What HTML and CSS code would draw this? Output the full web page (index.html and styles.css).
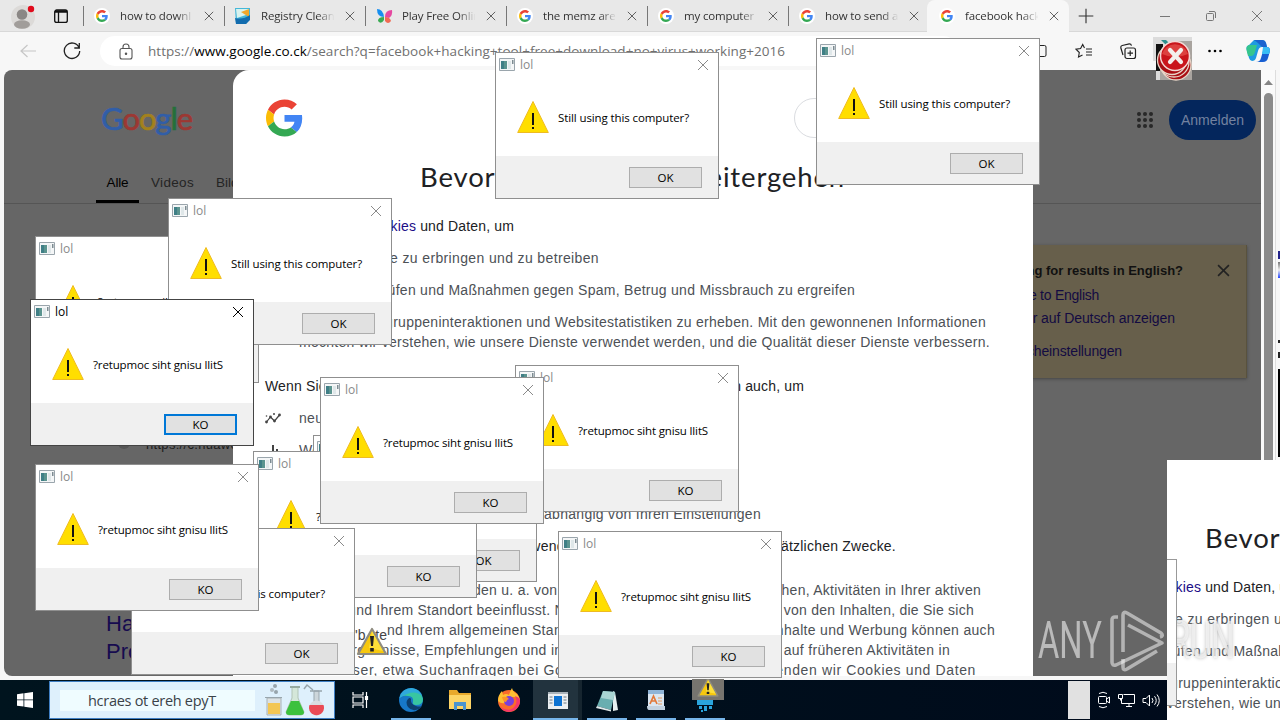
FILE: index.html
```html
<!DOCTYPE html>
<html lang="de">
<head>
<meta charset="utf-8">
<title>facebook hacking tool - Google Suche</title>
<link rel="stylesheet" href="styles.css">
</head>
<body>
<svg class="defs" aria-hidden="true">
  <symbol id="g" viewBox="0 0 48 48">
    <path fill="#EA4335" d="M24 9.5c3.54 0 6.71 1.22 9.21 3.6l6.85-6.85C35.9 2.38 30.47 0 24 0 14.62 0 6.51 5.38 2.56 13.22l7.98 6.19C12.43 13.72 17.74 9.5 24 9.5z"/>
    <path fill="#4285F4" d="M46.98 24.55c0-1.57-.15-3.09-.38-4.55H24v9.02h12.94c-.58 2.96-2.26 5.48-4.78 7.18l7.73 6c4.51-4.18 7.09-10.36 7.09-17.65z"/>
    <path fill="#FBBC05" d="M10.53 28.59c-.48-1.45-.76-2.99-.76-4.59s.27-3.14.76-4.59l-7.98-6.19C.92 16.46 0 20.12 0 24c0 3.88.92 7.54 2.56 10.78l7.97-6.19z"/>
    <path fill="#34A853" d="M24 48c6.48 0 11.93-2.13 15.89-5.81l-7.73-6c-2.15 1.45-4.92 2.3-8.16 2.3-6.26 0-11.57-4.22-13.47-9.91l-7.98 6.19C6.51 42.62 14.62 48 24 48z"/>
  </symbol>
  <symbol id="x" viewBox="0 0 12 12"><path d="M1 1l10 10M11 1L1 11" fill="none" stroke="currentColor"/></symbol>
  <symbol id="warn" viewBox="0 0 32 32">
    <path d="M16 .5L31.3 31.5H.7z" fill="#ffde00" stroke="#eebb22"/>
    <path d="M15 12h2v12h-2zM15 26h2v2h-2z" fill="#111"/>
  </symbol>
  <symbol id="oldwarn" viewBox="0 0 32 30">
    <path d="M16 2L30 27H2z" fill="#f7c80e" stroke="#8f8c80" stroke-width="2.2" stroke-linejoin="round"/>
    <path d="M16 4L27 24l-14-3z" fill="#ffe84a" opacity=".7"/>
    <path d="M14 9h4l-1 10h-2zM14.200 21h3.600v3.400h-3.600z" fill="#222"/>
  </symbol>
  <symbol id="app" viewBox="0 0 16 13">
    <path d="M.5.5h15v12H.5z" fill="#f4f6f7" stroke="#9aa5ac"/>
    <path d="M2 3h6v8H2z" fill="#5b948f"/><path d="M2 3h3v8H2z" fill="#3f7f86"/>
    <path d="M9 3h3v8H9z" fill="#dfe7e9"/><path d="M13 2h1.500v4H13z" fill="#7d8b92"/>
  </symbol>
</svg>

<div class="screen">
  <header class="tabbar">
    <div class="tabtools">
      <svg width="24" height="28" viewBox="0 0 24 28"><circle cx="12" cy="15" r="12" fill="#dcdad8"/><circle cx="11" cy="12.500" r="5.300" fill="#8b8785"/><ellipse cx="11" cy="22.500" rx="8" ry="4.200" fill="#a19d9a"/><circle cx="20" cy="7" r="3.200" fill="#e00b1c"/></svg>
      <svg width="16" height="16" viewBox="0 0 16 16" fill="none" stroke="#111" stroke-width="1.300"><rect x="1.700" y="2" width="12.600" height="12.400" rx="2"/><path d="M2 4h12M2 3h12M5.500 4v10"/></svg>
    </div>
    <div class="tabs" id="tabs"></div>
    <svg class="plus" width="18" height="18" viewBox="0 0 16 16"><path d="M8 1.500v13M1.500 8h13" stroke="#333"/></svg>
    <div class="winbtns">
      <svg width="12" height="12" viewBox="0 0 12 12"><path d="M1 6.500h10" stroke="#777"/></svg>
      <svg width="12" height="12" viewBox="0 0 12 12" fill="none" stroke="#777"><rect x="1.500" y="3.500" width="7" height="7" rx="1"/><path d="M4 1.500h5q1.500 0 1.500 1.500v5"/></svg>
      <svg class="gray" width="12" height="12"><use href="#x"/></svg>
    </div>
  </header>

  <div class="toolbar">
    <svg class="back" width="18" height="16" viewBox="0 0 18 16"><path d="M17 8H2M8.500 2L2 8l6.500 6" fill="none" stroke="#c6c6c6" stroke-width="1.200"/></svg>
    <svg class="reload" width="18" height="18" viewBox="0 0 18 18"><path d="M16 5.500A7.700 7.700 0 1 0 16.700 9M16.300 1v5h-5" fill="none" stroke="#222" stroke-width="1.300"/></svg>
    <div class="address">
      <svg width="14" height="17" viewBox="0 0 14 17" fill="none" stroke="#555" stroke-width="1.100"><rect x="1" y="5.500" width="12" height="10.500" rx="2"/><path d="M4 5.500V4a3 3 0 0 1 6 0v1.500"/><circle cx="7" cy="10.700" r=".7" fill="#555"/></svg>
      <span class="url" data-w="637">https://<b>www.google.co.ck</b>/search?q=facebook+hacking+tool+free+download+no+virus+working+2016</span>
    </div>
    <div class="actions">
      <svg width="18" height="16" viewBox="0 0 18 16" fill="none" stroke="#222"><rect x="2" y="2.500" width="13" height="11" rx="1.500"/></svg>
      <svg width="18" height="16" viewBox="0 0 18 16" fill="none" stroke="#222" stroke-width="1.100"><path d="M9.500 5L7.700 1.500 5.600 5.600 1 6.200 4.300 9.500 3.500 14l4-2M11 6h6M11 9h6M11 12h6"/></svg>
      <svg width="18" height="17" viewBox="0 0 18 17" fill="none" stroke="#222" stroke-width="1.200"><rect x="6" y="5" width="10.500" height="10.500" rx="2"/><path d="M11.200 7.500v5.500M8.500 10.200H14M4 12L1.800 4.800Q1.500 3 3.200 2.500l7-1.700Q12 .7 12.500 2.700"/></svg>
      <div class="ext">
        <svg width="40" height="45" viewBox="0 0 40 45"><path d="M0 0h39v43H3V24H0z" fill="#dcdcdc"/><path d="M3 7h7v27H3z" fill="#111"/><path d="M8 3l8 8h5l-8-8z" fill="#2c8f8c"/><path d="M24 4h15v39H7V28h12z" fill="#a9a49f"/>
          <g stroke="#e8d6c8" stroke-width="1.300" fill="#a90f14"><circle cx="23" cy="28" r="15"/><circle cx="21" cy="25" r="15"/><circle cx="19" cy="23" r="14.500"/></g><circle cx="22" cy="19" r="14.500" fill="#c9151b" stroke="#f3d9d5" stroke-width="1.500"/><path d="M9 17a13.500 13.500 0 0 1 26 0q-13 6-26 0z" fill="#e5544f" opacity=".7"/><path d="M17 13l11 12M28 13L17 25" stroke="#f3efec" stroke-width="4.200" stroke-linecap="round"/></svg>
      </div>
      <svg width="16" height="6" viewBox="0 0 16 6"><circle cx="2.500" cy="3" r="1.300"/><circle cx="8" cy="3" r="1.300"/><circle cx="13.500" cy="3" r="1.300"/></svg>
      <svg width="24" height="22" viewBox="0 0 24 22"><path d="M8 0h8q3 0 4 3l1 4h-5q-3 0-4 4l-2 7q-1 3-4 3-2 0-3-3L.5 9Q0 6 3 5z" fill="#1e9be0"/><path d="M3 5h8l-2 7q-1 4-4 4H2L.5 10Q0 6 3 5z" fill="#35c58d"/><path d="M10 22q4 0 5-4l2-7q1-4 4-4 3 0 3 4l-2 7q-1 4-5 4z" fill="#185fd2"/><path d="M17 7h4q3 0 3 4l-1 3h-7z" fill="#38bdf5"/><path d="M8 0h8q3 0 4 3l1 4h-5l-3-3q-2-2-5-4z" fill="#1a63cf"/></svg>
    </div>
  </div>

  <main class="viewport">
    <section class="results">
      <div class="top">
        <div class="logo" data-w="91"><i class="b">G</i><i class="r">o</i><i class="y">o</i><i class="b">g</i><i class="gr">l</i><i class="r">e</i></div>
        <div class="account">
          <svg width="16" height="16" viewBox="0 0 16 16" fill="#282828"><circle cx="2" cy="2" r="2"/><circle cx="8" cy="2" r="2"/><circle cx="14" cy="2" r="2"/><circle cx="2" cy="8" r="2"/><circle cx="8" cy="8" r="2"/><circle cx="14" cy="8" r="2"/><circle cx="2" cy="14" r="2"/><circle cx="8" cy="14" r="2"/><circle cx="14" cy="14" r="2"/></svg>
          <div class="signin"><span data-w="63">Anmelden</span></div>
        </div>
      </div>
      <nav class="nav"><span class="on"><span data-w="22">Alle</span></span><span data-w="43">Videos</span><span>Bilder</span></nav>
      <div class="lower">
        <div class="hits">
          <p class="cite"><i></i>https://c.huawei.com</p>
          <h3>Hacker<br>Programme</h3>
        </div>
        <aside class="lang">
          <p><b data-w="191">Looking for results in English?</b><svg width="13" height="13"><use href="#x"/></svg></p>
          <a data-w="110">Change to English</a>
          <a data-w="177">Immer auf Deutsch anzeigen</a>
          <a class="last" data-w="124">Spracheinstellungen</a>
        </aside>
      </div>
    </section>
    <div class="scroll"><svg width="9" height="5" viewBox="0 0 9 5"><path d="M4.500 0L9 5H0z" fill="#858585"/></svg><div class="thumb"></div></div>
    <div class="edge"><i class="blue"></i><i class="blue2"></i><i class="mark"></i><i class="mark"></i><i class="black"></i></div>

    <section class="consent">
      <div class="chead"><svg width="37" height="38"><use href="#g"/></svg><div class="pill"></div></div>
      <h1><span data-w="425">Bevor Sie zu Google weitergehen</span></h1>
      <div class="copy">
        <p class="dark"><span data-w="249">Wir verwenden <a>Cookies</a> und Daten, um</span></p>
        <p class="in"><span data-w="300">unsere Dienste zu erbringen und zu betreiben</span></p>
        <p class="in"><span data-w="556">Ausfälle zu prüfen und Maßnahmen gegen Spam, Betrug und Missbrauch zu ergreifen</span></p>
        <p class="in"><span data-w="687">Daten zu Zielgruppeninteraktionen und Websitestatistiken zu erheben. Mit den gewonnenen Informationen</span><br><span data-w="691">möchten wir verstehen, wie unsere Dienste verwendet werden, und die Qualität dieser Dienste verbessern.</span></p>
        <p class="dark wide"><span data-w="539">Wenn Sie „Alle akzeptieren“ auswählen, verwenden wir Cookies und Daten auch, um</span></p>
        <p class="icon"><svg width="16" height="12" viewBox="0 0 16 12"><path d="M1.500 10l4-5 4 4L14.500 3" fill="none" stroke="#444" stroke-width="1.200"/><g fill="#444"><circle cx="1.500" cy="10" r="1.400"/><circle cx="5.500" cy="5" r="1.400"/><circle cx="9.500" cy="9" r="1.400"/><circle cx="14.500" cy="3" r="1.400"/><circle cx="9" cy="2" r="1"/><circle cx="1.500" cy="4" r=".8"/></g></svg>neue Dienste zu entwickeln</p>
        <p class="icon"><svg width="16" height="12" viewBox="0 0 16 12"><path d="M3 8h2v4H3zM7 1h2v11H7zM11 5h2v7h-2z" fill="#444"/></svg>Werbung auszuliefern</p>
        <p class="in">personalisierte Inhalte</p>
        <p class="in"><span data-w="462">personalisierte Werbung anzuzeigen, abhängig von Ihren Einstellungen</span></p>
        <p class="dark"><span data-w="631">Wenn Sie „Alle ablehnen“ auswählen, verwenden wir Cookies nicht für diese zusätzlichen Zwecke.</span></p>
        <p class="wide"><span data-w="716">Nicht personalisierte Inhalte werden u. a. von Inhalten, die Sie sich gerade ansehen, Aktivitäten in Ihrer aktiven</span><br>
        <span data-w="709">Suchsitzung und Ihrem Standort beeinflusst. Nicht personalisierte Werbung wird von den Inhalten, die Sie sich</span><br>
        <span data-w="730">gerade ansehen, und Ihrem allgemeinen Standort beeinflusst. Personalisierte Inhalte und Werbung können auch</span><br>
        <span data-w="685">relevantere Ergebnisse, Empfehlungen und individuelle Werbung enthalten, die auf früheren Aktivitäten in</span><br>
        <span data-w="711">diesem Browser, etwa Suchanfragen bei Google, basieren. Außerdem verwenden wir Cookies und Daten</span></p>
      </div>
    </section>
  </main>

  <footer class="taskbar">
    <div class="start"><svg width="16" height="16" viewBox="0 0 16 16" fill="#fff"><path d="M0 2.200l6.500-.9v6.200H0zM7.300 1.200L16 0v7.500H7.300zM0 8.300h6.500v6.300L0 13.700zM7.300 8.300H16V16l-8.700-1.200z"/></svg></div>
    <div class="search"><span class="field"><span data-w="128">hcraes ot ereh epyT</span></span>
      <svg width="62" height="34" viewBox="0 0 62 34">
        <path d="M3 15h14v17H3z" fill="#dce2e4" stroke="#a8b2b6"/><path d="M4 20h12v11H4z" fill="#f3c653"/><path d="M1 14.500h17" stroke="#98a5ac"/><circle cx="8" cy="7" r="2" fill="#aeb9bf"/><circle cx="11" cy="3" r="2" fill="#98a5ac"/><circle cx="12" cy="9" r="2" fill="#98a5ac"/>
        <path d="M28 4h6v11l6 14q0 3-3 3H25q-3 0-3-3l6-14z" fill="#d4e7d9" stroke="#b1c4b6"/><path d="M27 18h8l5 11q0 3-3 3H25q-3 0-3-3z" fill="#3cc13d"/><path d="M26 3h10v2H26z" fill="#96aaa0"/>
        <path d="M50 8h5v12h-5z" fill="#cdd6da" stroke="#9aa7ae"/><circle cx="52.500" cy="25" r="7.500" fill="#d9dde0"/><path d="M45.500 22h14a7.500 7.500 0 1 1-14 0z" fill="#ea4b55"/><path d="M46 8h12M49 7l-6-5-3 4" stroke="#98a5ac" fill="none" stroke-width="1.500"/>
      </svg></div>
    <div class="cell view"><svg width="17" height="16" viewBox="0 0 17 16" fill="none" stroke="#fff" stroke-width="1.200"><path d="M1 0v3h10V0M1 16v-3h10v3M1 5h10v6H1zM14.500 0v4M14.500 8v8"/><path d="M13.500 4.500h2v3h-2z" fill="#fff"/></svg></div>
    <div class="cell run"><svg width="26" height="26" viewBox="0 0 26 26"><circle cx="13" cy="13" r="12" fill="#1778c8"/><path d="M1.500 11A12 12 0 0 1 25 12q0 6-7 6-4 0-3-3 1-6-5-6-6-1-8.500 2z" fill="#38c6a0"/><path d="M1.500 11A12 12 0 0 1 14 1q8 1 10 8-8-8-22.500 2z" fill="#2fa9dc"/><path d="M10 12q-3 3 0 8 4 5 11 2 2-1 3-3-3 1-6 0-6-2-5-7-1-2-3 0z" fill="#0d3f6e"/></svg></div>
    <div class="cell"><svg width="24" height="22" viewBox="0 0 24 22"><path d="M1 1h8l2 3h12v16H1z" fill="#e8a92c"/><path d="M1 6h22v14H1z" fill="#fdd566"/><path d="M6 13h12v8h-3v-4H9v4H6z" fill="#4a94cf"/></svg></div>
    <div class="cell"><svg width="24" height="24" viewBox="0 0 24 24"><circle cx="12" cy="13" r="11" fill="#fb6b2b"/><path d="M1 13q0-6 4-10l1 4q3-2 6 0 1-4 3-7 1 4 5 6 3 4 3 8-2-5-6-5-8-1-9 6-4 1-7-2z" fill="#ffbf32"/><path d="M23 12a11 11 0 0 1-20 7q10 6 15-1 3-5 0-10 4 1 5 4z" fill="#f7356b"/><circle cx="12" cy="13" r="5" fill="#7a3fdb"/><path d="M5 9q5-1 7 2-2 0-3 3-3 0-4-5z" fill="#ff9426"/></svg></div>
    <div class="cell run active"><svg width="20" height="17" viewBox="0 0 20 17"><path d="M0 0h20v17H0z" fill="#eceff1"/><path d="M0 0h20v2H0z" fill="#aab3ba"/><path d="M6 4h8v10H6z" fill="#0e73d2"/><path d="M1.500 5h3M1.500 8h3M1.500 11h3M15.500 5h3M15.500 8h3M15.500 11h3" stroke="#6e7a83"/></svg></div>
    <div class="cell run"><svg width="24" height="23" viewBox="0 0 24 23"><path d="M18 2l2 1 3 18-5 1z" fill="#e5eff0"/><path d="M8 2l12 1-4 18-14-4z" fill="#69aeb0"/><path d="M8 2l12 1-2 8-12-2z" fill="#a9d5d4"/><path d="M2 17l14 4v1.500L1 19z" fill="#dfe9ea"/></svg></div>
    <div class="cell run"><svg width="20" height="23" viewBox="0 0 20 23"><path d="M2 1h16v17H2z" fill="#dbe7f2"/><path d="M2 1h16v4H2z" fill="#8fb4d7"/><path d="M1 17h18v4H3q-2 0-2-4z" fill="#c3d2e0"/><path d="M4 15L7.500 7 11 15M5.500 12h4" stroke="#e2793a" stroke-width="1.700" fill="none"/><path d="M12 9h4M12 12h4M12 15h4" stroke="#e79a5e"/></svg></div>
    <div class="cell run memz"><svg width="18" height="12" viewBox="0 0 18 12"><path d="M1 0h16v5H1zM3 6h3v3H3zM8 6h3v5H8zM13 6h3v3h-3zM5 10h2v2H5z" fill="#2aa4dc"/></svg></div>
    <div class="tray"><i></i>
      <svg width="14" height="18" viewBox="0 0 14 18" fill="none" stroke="#fff"><rect x="1.500" y="5.500" width="8" height="7" rx="1"/><path d="M9.500 8l3-2v6l-3-2M2 2.500q4-2.500 8 0M2 15.500q4 2.500 8 0"/></svg>
      <svg width="17" height="15" viewBox="0 0 17 15" fill="none" stroke="#fff"><path d="M5.500 1.500h11v9h-13V6M8 13.500h6M11 10.500v3M.500 1.500h4v4h-4zM2.500 5.500v2"/></svg>
      <svg width="18" height="15" viewBox="0 0 18 15" fill="none" stroke="#fff"><path d="M1 5.500h3l3.500-3.500v11L4 9.500H1zM10 5q2 2.500 0 5M12.500 3.200q3.500 4.300 0 8.600M15 1.500q4.500 6 0 12"/></svg>
    </div>
  </footer>

  <div class="smudge"><span>'b</span><span>te</span></div>
  <div id="dialogs"></div>
  <svg class="float w1"><use href="#oldwarn"/></svg>
  <svg class="float w2"><use href="#oldwarn" y="-2"/></svg>

  <div class="echo">
    <div class="echo-dlg"></div>
    <div class="echo-text">
      <h1><span data-w="425">Bevor Sie zu Google weitergehen</span></h1>
      <div class="copy">
        <p class="dark"><span data-w="249">Wir verwenden <a>Cookies</a> und Daten, um</span></p>
        <p class="in"><span data-w="300">unsere Dienste zu erbringen und zu betreiben</span></p>
        <p class="in"><span data-w="556">Ausfälle zu prüfen und Maßnahmen gegen Spam, Betrug und Missbrauch zu ergreifen</span></p>
        <p class="in"><span data-w="687">Daten zu Zielgruppeninteraktionen und Websitestatistiken zu erheben. Mit den gewonnenen Informationen</span><br><span data-w="691">möchten wir verstehen, wie unsere Dienste verwendet werden, und die Qualität dieser Dienste verbessern.</span></p>
      </div>
    </div>
  </div>

  <div class="mark-any"><span class="any">ANY</span>
    <svg width="56" height="62" viewBox="0 0 56 62" fill="none" stroke="#fff" stroke-opacity=".5" stroke-width="3.600" stroke-linejoin="round"><path d="M8 7H5Q2 7 2 10v42q0 4 4 3l46-22L18 15"/><path d="M50 27q4-1 1-4L17 3q-4-2-4 2v37M13 49v8q0 4 4 2l30-18"/></svg>
    <span class="run-t">RUN</span></div>
</div>
<script src="app.js"></script>
</body>
</html>
```
FILE: styles.css
```css
* { box-sizing: border-box; }
body { margin: 0; font-family: "Liberation Sans", Arial, sans-serif; }
p, h1, h3 { margin: 0; font-weight: 400; }
i { font-style: normal; }
.defs { position: absolute; width: 0; height: 0; }
svg { flex: none; display: block; }
[data-w] { white-space: nowrap; }
.screen { position: relative; width: 1280px; height: 720px; overflow: hidden; display: flex; flex-direction: column; background: #f7f7f7; }

.tabbar { height: 32px; flex: none; display: flex; align-items: center; background: #e8e8e8; border-bottom: 1px solid #d8d8d8; font: 12px "Open Sans", "Noto Sans", sans-serif; color: #333; }
.tabtools { width: 83px; display: flex; gap: 18px; padding-left: 11px; align-items: center; }
.tabs { display: flex; height: 32px; }
.tab { width: 141px; display: flex; align-items: center; padding-left: 11px; position: relative; }
.tab::before { content: ""; position: absolute; left: 0; top: 6px; width: 1px; height: 20px; background: #777; }
.tab .fav { width: 16px; height: 16px; border-radius: 50%; background: #fff; display: grid; place-items: center; }
.tab .fav.flat { background: none; }
.tab .label { width: 75px; margin-left: 10px; overflow: hidden; white-space: nowrap; font-size: 11.500px; letter-spacing: -.15px; -webkit-mask-image: linear-gradient(90deg, #000 75%, transparent 98%); mask-image: linear-gradient(90deg, #000 75%, transparent 98%); }
.tab .close { margin-left: 9px; color: #444; }
.tab.current { background: #f7f7f7; border-radius: 8px 8px 0 0; margin-left: -2px; width: 142px; padding-left: 12px; }
.tab.current::before { display: none; }
.plus { margin-left: 8px; }
.winbtns { margin-left: auto; display: flex; gap: 34px; padding-right: 17px; }
.gray { color: #777; }

.toolbar { height: 38px; flex: none; display: flex; align-items: center; background: #f7f7f7; }
.back { margin-left: 19px; }
.reload { margin-left: 26px; }
.address { margin-left: 19px; width: 858px; height: 30px; border-radius: 15px; background: #fff; display: flex; align-items: center; padding-left: 19px; }
.url { margin-left: 15px; font: 13.500px "Open Sans", "Noto Sans", sans-serif; color: #707070; }
.url b { font-weight: 400; color: #000; }
.actions { flex: 1; margin-left: 73px; display: flex; align-items: center; height: 38px; }
.actions > svg:nth-child(2) { margin-left: 26px; }
.actions > svg:nth-child(3) { margin-left: 26px; }
.ext { width: 40px; height: 38px; margin: 0 14px 0 16px; position: relative; z-index: 5; padding-top: 5px; }
.actions > svg:nth-child(6) { margin-left: 23px; }

.viewport { flex: none; height: 606px; padding-left: 4px; display: flex; position: relative; }
.results { width: 1257px; background: #666; border-radius: 8px 0 0 8px; overflow: hidden; }
.top { height: 98px; display: flex; justify-content: space-between; padding: 0 5px 0 97px; }
.logo { margin-top: 29px; font: 400 31px/38px Lato, sans-serif; -webkit-text-stroke: .7px currentColor; }
.logo .b { color: #315ea8; } .logo .r { color: #9c3833; } .logo .y { color: #a3811c; } .logo .gr { color: #24703a; }
.logo i { -webkit-text-stroke: .7px currentColor; }
.account { display: flex; gap: 16px; align-items: center; height: 100px; }
.signin { width: 87px; height: 40px; border-radius: 20px; background: #04265c; color: #7382a0; font-size: 14px; display: grid; place-items: center; }
.nav { height: 36px; display: flex; padding-left: 92px; font-size: 13.500px; color: #242424; border-bottom: 1px solid #555; line-height: 29px; }
.nav .on { width: 43px; height: 35px; color: #000; text-align: center; border-bottom: 3px solid #000; margin-right: 12px; }
.nav > span:nth-child(2) { margin-right: 22px; }
.lower { display: flex; justify-content: space-between; }
.hits { padding: 231px 0 0 102px; color: #160b4f; }
.cite { font-size: 13px; line-height: 20px; color: #1c1c1c; letter-spacing: .3px; display: flex; gap: 28px; }
.cite i { width: 12px; height: 12px; border-radius: 6px; margin: 2px -12px 0 12px; background: #555; }
.hits h3 { font-size: 22px; line-height: 28px; margin-top: 155px; }
.lang { margin: 41px 14px 0 0; width: 260px; height: 133px; padding: 15px 16px 0 0; background: #675f4b; border-right: 1px solid #59523d; box-shadow: 0 1px 3px #444; font-size: 14px; display: grid; grid-template-rows: 20px 30px 16px 50px; align-content: start; color: #130b42; }
.lang p { display: flex; justify-content: space-between; align-items: center; padding-left: 5px; color: #111; font-size: 13px; }
.lang p svg { color: #222; stroke-width: 1.500; }
.lang a { justify-self: start; align-self: center; line-height: 20px; }
.lang a:nth-child(2) { margin-left: 2px; } .lang a:nth-child(3) { margin-left: 11px; } .lang .last { margin-left: 11px; }
.scroll { width: 14px; background: #fafafa; display: flex; flex-direction: column; align-items: center; padding-top: 10px; }
.thumb { width: 9px; margin: 8px 0 0 1px; flex: 1; border-radius: 5px 5px 0 0; background: #8b8b8b; }
.edge { width: 5px; border-left: 1px solid #ddd; background: #f7f7f7; padding-top: 181px; display: flex; flex-direction: column; align-items: flex-end; }
.edge i { width: 2px; }
.blue { height: 8px; background: #23238a; } .blue2 { height: 16px; margin-top: 3px; background: linear-gradient(#777, #eee, #24f); }
.mark { height: 3px; background: #222; margin-top: 62px; } .mark + .mark { margin-top: 9px; height: 6px; }
.black { height: 88px; background: #000; margin-top: 11px; }

.consent { position: absolute; left: 233px; top: 0; width: 800px; height: 606px; background: #fff; border-radius: 16px 0 0 0; padding-left: 32px; overflow: hidden; }
.chead { display: flex; height: 87px; padding: 29px 0 0 1px; }
.pill { width: 170px; height: 40px; margin: -1px 0 0 491px; border: 1px solid #dadce0; border-radius: 20px; }
h1 { font: 27.500px/40px Lato, sans-serif; color: #202124; padding-left: 155px; }
.copy { padding-top: 19px; display: flex; flex-direction: column; gap: 12px; font-size: 14px; line-height: 20px; color: #4d5156; white-space: nowrap; }
.copy .dark { color: #202124; } .copy a { color: #1a0d87; }
.copy .in { padding-left: 34px; } .copy .wide { margin-top: 12px; }
.copy .icon { display: flex; gap: 18px; align-items: center; letter-spacing: .3px; }

.taskbar { margin-top: 4px; height: 40px; display: flex; background: linear-gradient(90deg, #00141e, #000a1b); }
.start { width: 49px; display: grid; place-items: center; }
.search { width: 286px; height: 38px; margin-top: 1px; border: 1px solid #3f7fc4; background: #def0fc; display: flex; align-items: center; padding-left: 10px; gap: 9px; }
.field { width: 195px; height: 21px; background: #effcff; padding-left: 28px; font: 14.500px/22px "Open Sans", "Noto Sans", sans-serif; color: #3a4248; }
.cell { width: 49px; height: 40px; display: grid; place-items: center; position: relative; }
.view { width: 51px; }
.run::after { content: ""; position: absolute; bottom: 0; left: 5px; width: 40px; height: 2px; background: #76b5ea; }
.active { background: linear-gradient(90deg, transparent 0, #22333e 0 45px, #16252f 45px); }
.active::after { left: 0; width: 45px; }
.memz { padding-top: 12px; }
.tray { margin-left: auto; width: 212px; display: flex; align-items: center; gap: 7px; }
.tray i { width: 22px; height: 38px; background: #e1e1e1; }

.dialog { position: absolute; width: 224px; height: 147px; border: 1px solid #8f8f8f; background: #fff; display: flex; flex-direction: column; font: 11.500px "Open Sans", "Noto Sans", sans-serif; color: #000; }
.dialog .bar { height: 23px; display: flex; align-items: center; padding: 0 9px 0 3px; color: #8a8a8a; gap: 5px; font-size: 12px; }
.dialog .bar svg:last-child { margin-left: auto; }
.dialog .body { height: 80px; display: flex; align-items: center; padding: 2px 0 0 21px; gap: 9px; }
.dialog .body span { margin-top: 1px; }
.dialog .foot { flex: 1; background: #f0f0f0; display: flex; justify-content: flex-end; padding: 11px 16px 0 0; }
.btn { width: 73px; height: 21px; border: 1px solid #adadad; background: #e1e1e1; display: grid; place-items: center; }
.focus { border-color: #444; } .focus .bar { color: #000; } .focus .btn { border: 2px solid #0078d7; }

.smudge { position: absolute; left: 355px; top: 623px; width: 32px; height: 23px; background: #fff; display: flex; justify-content: space-between; font-size: 14px; line-height: 24px; color: #444; }
.float { position: absolute; width: 32px; height: 30px; }
.w1 { left: 356px; top: 627px; }
.w2 { left: 692px; top: 679px; height: 21px; background: #76746f; overflow: hidden; }

.echo { position: absolute; left: 1167px; top: 460px; width: 113px; height: 260px; background: #fff; overflow: hidden; }
.echo-text { padding: 58px 0 0; margin-left: -117px; width: 900px; }
.echo-dlg { position: absolute; left: -214px; top: 99px; width: 224px; height: 147px; border: 1px solid #999; background: linear-gradient(#fff 103px, #f0f0f0 103px); z-index: 1; }

.mark-any { position: absolute; left: 1038px; top: 609px; height: 63px; display: flex; align-items: center; color: rgba(255,255,255,.55); font: 51px/62px Roboto, sans-serif; }
.mark-any span { transform-origin: left center; transform: scaleX(.64); width: 72px; }
.mark-any svg { margin: 0 4px 0 0; }
.run-t { text-shadow: 0 0 5px #bbb; }
```
FILE: app.js
```js
const use = (id, w, h, cls = "") => `<svg class="${cls}" width="${w}" height="${h}"><use href="#${id}"/></svg>`;
const favicons = {
  g: use("g", 12, 12),
  reg: '<svg width="16" height="16" viewBox="0 0 16 16"><path d="M0 0h15v11l-4 5H1z" fill="#44b7d8"/><path d="M1 1h13v5L2 10z" fill="#d8f2ef"/><path d="M6 4l8-3v8z" fill="#f0a72c"/><path d="M0 10q8 2 15-3v5l-4 4H1z" fill="#126cae"/></svg>',
  msn: '<svg width="17" height="17" viewBox="0 0 17 17"><path d="M1 1q6 0 7 8Q1 9 1 1z" fill="#168ef0"/><path d="M9 9q0-7 7-7 1 5-3 8z" fill="#e548a0"/><path d="M8 9q-6 0-6 4 3 4 6-1z" fill="#39aa52"/><path d="M9 9q5 0 6 4-3 4-6 0z" fill="#f06a53"/></svg>'
};
const tabs = [["g", "how to downl"], ["reg", "Registry Clean"], ["msn", "Play Free Onlin"], ["g", "the memz are"], ["g", "my computer"], ["g", "how to send a"], ["g", "facebook hack"]];
document.getElementById("tabs").innerHTML = tabs.map(([f, t], i) =>
  `<div class="tab${i === 6 ? " current" : ""}"><span class="fav${f === "g" ? "" : " flat"}">${favicons[f]}</span><span class="label">${t}</span>${use("x", 10, 10, "close")}</div>`).join("");

// left, top, reversed, focused; listed from the back to the front
const windows = [[313, 435], [35, 236, 1], [168, 198], [253, 451, 1], [515, 365, 1], [320, 377, 1], [131, 528], [35, 464, 1], [558, 531, 1], [495, 52], [816, 38], [30, 299, 1, 1]];
document.getElementById("dialogs").innerHTML = windows.map(([x, y, rev, focus]) =>
  `<div class="dialog${focus ? " focus" : ""}" style="left:${x}px;top:${y}px"><div class="bar">${use("app", 16, 13)}<span>lol</span>${use("x", 12, 12)}</div><div class="body">${use("warn", 32, 32)}<span data-w="${rev ? 130 : 131}">${rev ? "?retupmoc siht gnisu llitS" : "Still using this computer?"}</span></div><div class="foot"><div class="btn">${rev ? "KO" : "OK"}</div></div></div>`).join("");

for (const el of document.querySelectorAll("[data-w]")) {
  const range = document.createRange();
  range.selectNodeContents(el);
  const natural = range.getBoundingClientRect().width;
  el.style.letterSpacing = (el.dataset.w - natural) / el.textContent.length + "px";
}
```
